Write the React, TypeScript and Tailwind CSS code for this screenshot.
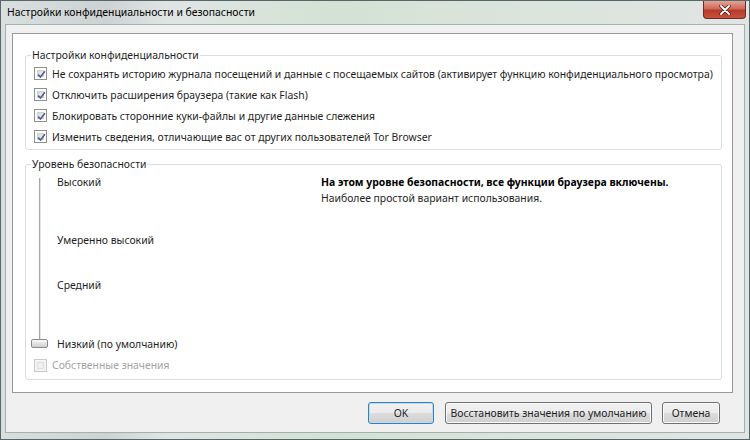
import type { ReactNode } from 'react';

const privacyOptions = [
  'Не сохранять историю журнала посещений и данные с посещаемых сайтов (активирует функцию конфиденциального просмотра)',
  'Отключить расширения браузера (такие как Flash)',
  'Блокировать сторонние куки-файлы и другие данные слежения',
  'Изменить сведения, отличающие вас от других пользователей Tor Browser',
];

function CheckBox({ checked, disabled }: { checked?: boolean; disabled?: boolean }) {
  return (
    <div
      className={`w-[13px] h-[13px] border shrink-0 p-[2px] ${disabled ? 'border-[#c8c8c8] bg-[#f4f4f4]' : 'border-[#8f8f8f] bg-white'}`}
    >
      <div
        className={`w-full h-full relative ${disabled ? 'bg-[#f0f0f0] border border-[#dedede]' : 'bg-[linear-gradient(135deg,#d6d6d6,#f6f6f6)] border border-[#cfcfcf]'}`}
      >
        {checked && (
          <svg viewBox="0 0 9 9" className="absolute -left-[1px] -top-[1px] w-[9px] h-[9px]">
            <path d="M1.2 4.6 L3.5 7 L7.9 1.3" fill="none" stroke="#4a5f97" strokeWidth="1.6" />
          </svg>
        )}
      </div>
    </div>
  );
}

function Group({ title, children, className = '' }: { title: string; children: ReactNode; className?: string }) {
  return (
    <fieldset className={`border border-[#d5dfe5] rounded-[3px] ${className}`}>
      <legend className="ml-[5px] px-[1px] leading-[16px] text-[#1e1e1e]">{title}</legend>
      {children}
    </fieldset>
  );
}

function Button({ children, primary, className = '' }: { children: ReactNode; primary?: boolean; className?: string }) {
  return (
    <button
      className={`h-[22px] rounded-[3px] border whitespace-nowrap text-[10.4px] leading-[20px] text-[#1e1e1e] bg-[linear-gradient(#f2f2f2,#ebebeb_50%,#dddddd_50%,#cfcfcf)] ${
        primary ? 'border-[#3c7fb1] shadow-[inset_0_0_0_1px_#b7dcf3]' : 'border-[#707070] shadow-[inset_0_0_0_1px_#fbfbfb]'
      } ${className}`}
    >
      {children}
    </button>
  );
}

export default function App() {
  return (
    <div
      className="w-[750px] h-[440px] flex flex-col border border-[#56676a] bg-[linear-gradient(90deg,#d9dfdf_0%,#ccd3d2_14%,#e0e5e4_22%,#d3e2d4_45%,#d9e3da_60%,#e0e5e4_100%)] overflow-hidden"
      style={{ fontFamily: '"Noto Sans", "Open Sans", sans-serif' }}
    >
      <div className="h-[23px] flex items-start justify-between shrink-0">
        <div className="pl-[6px] pt-[3px] text-[10.4px] leading-[16px] text-black">
          Настройки конфиденциальности и безопасности
        </div>
        <div className="mr-[3px] w-[43px] h-[18px] rounded-b-[4px] border border-t-0 border-[#6e2a22] bg-[linear-gradient(#e4a496,#cf6a58_45%,#b8392a_55%,#c5533f)] flex items-center justify-center">
          <svg viewBox="0 0 12 10" className="w-[12px] h-[10px]">
            <path d="M2 1 L10 9 M10 1 L2 9" stroke="#4b1d18" strokeWidth="3.4" strokeLinecap="round" />
            <path d="M2 1 L10 9 M10 1 L2 9" stroke="#ffffff" strokeWidth="1.8" strokeLinecap="round" />
          </svg>
        </div>
      </div>

      <div className="flex-1 mx-[4px] mb-[6px] border border-[#9fb2ad] bg-[#f0f0f0] flex flex-col text-[10.4px] text-[#1e1e1e]">
        <div className="mt-[8px] ml-[6px] mr-[11px] h-[360px] border border-[#989898] bg-white pt-[13px] pl-[12px] pr-[10px]">
          <Group title="Настройки конфиденциальности" className="pb-[2px]">
            {privacyOptions.map((text) => (
              <div key={text} className="h-[21px] flex items-center pl-[8px] gap-[5px]">
                <CheckBox checked />
                <span className="leading-[16px] whitespace-nowrap">{text}</span>
              </div>
            ))}
          </Group>

          <Group title="Уровень безопасности" className="mt-[6px] pb-[6px]">
            <div className="flex">
              <div className="ml-[5px] w-[17px] pt-[6px] flex flex-col items-center">
                <div className="w-[2px] h-[161px] border-l border-[#a7a7a7] bg-[#e4e4e4]" />
                <div className="w-[17px] h-[9px] rounded-[2px] border border-[#8a8a8a] bg-[linear-gradient(#fbfbfb,#e2e2e2_50%,#cfcfcf)]" />
              </div>
              <div className="ml-[9px] w-[264px] pt-[2px] flex flex-col leading-[16px]">
                <span>Высокий</span>
                <span className="mt-[42px]">Умеренно высокий</span>
                <span className="mt-[29px]">Средний</span>
                <span className="mt-[43px]">Низкий (по умолчанию)</span>
              </div>
              <div className="pt-[2px] leading-[16px]">
                <div className="font-bold text-black whitespace-nowrap">На этом уровне безопасности, все функции браузера включены.</div>
                <div>Наиболее простой вариант использования.</div>
              </div>
            </div>
            <div className="mt-[5px] h-[16px] flex items-center pl-[8px] gap-[5px]">
              <CheckBox disabled />
              <span className="leading-[16px] text-[#a3a3a3]">Собственные значения</span>
            </div>
          </Group>
        </div>

        <div className="mt-[9px] flex justify-end pr-[24px]">
          <Button primary className="w-[66px]">OK</Button>
          <Button className="ml-[11px] w-[207px]">Восстановить значения по умолчанию</Button>
          <Button className="ml-[10px] w-[58px]">Отмена</Button>
        </div>
      </div>
    </div>
  );
}
